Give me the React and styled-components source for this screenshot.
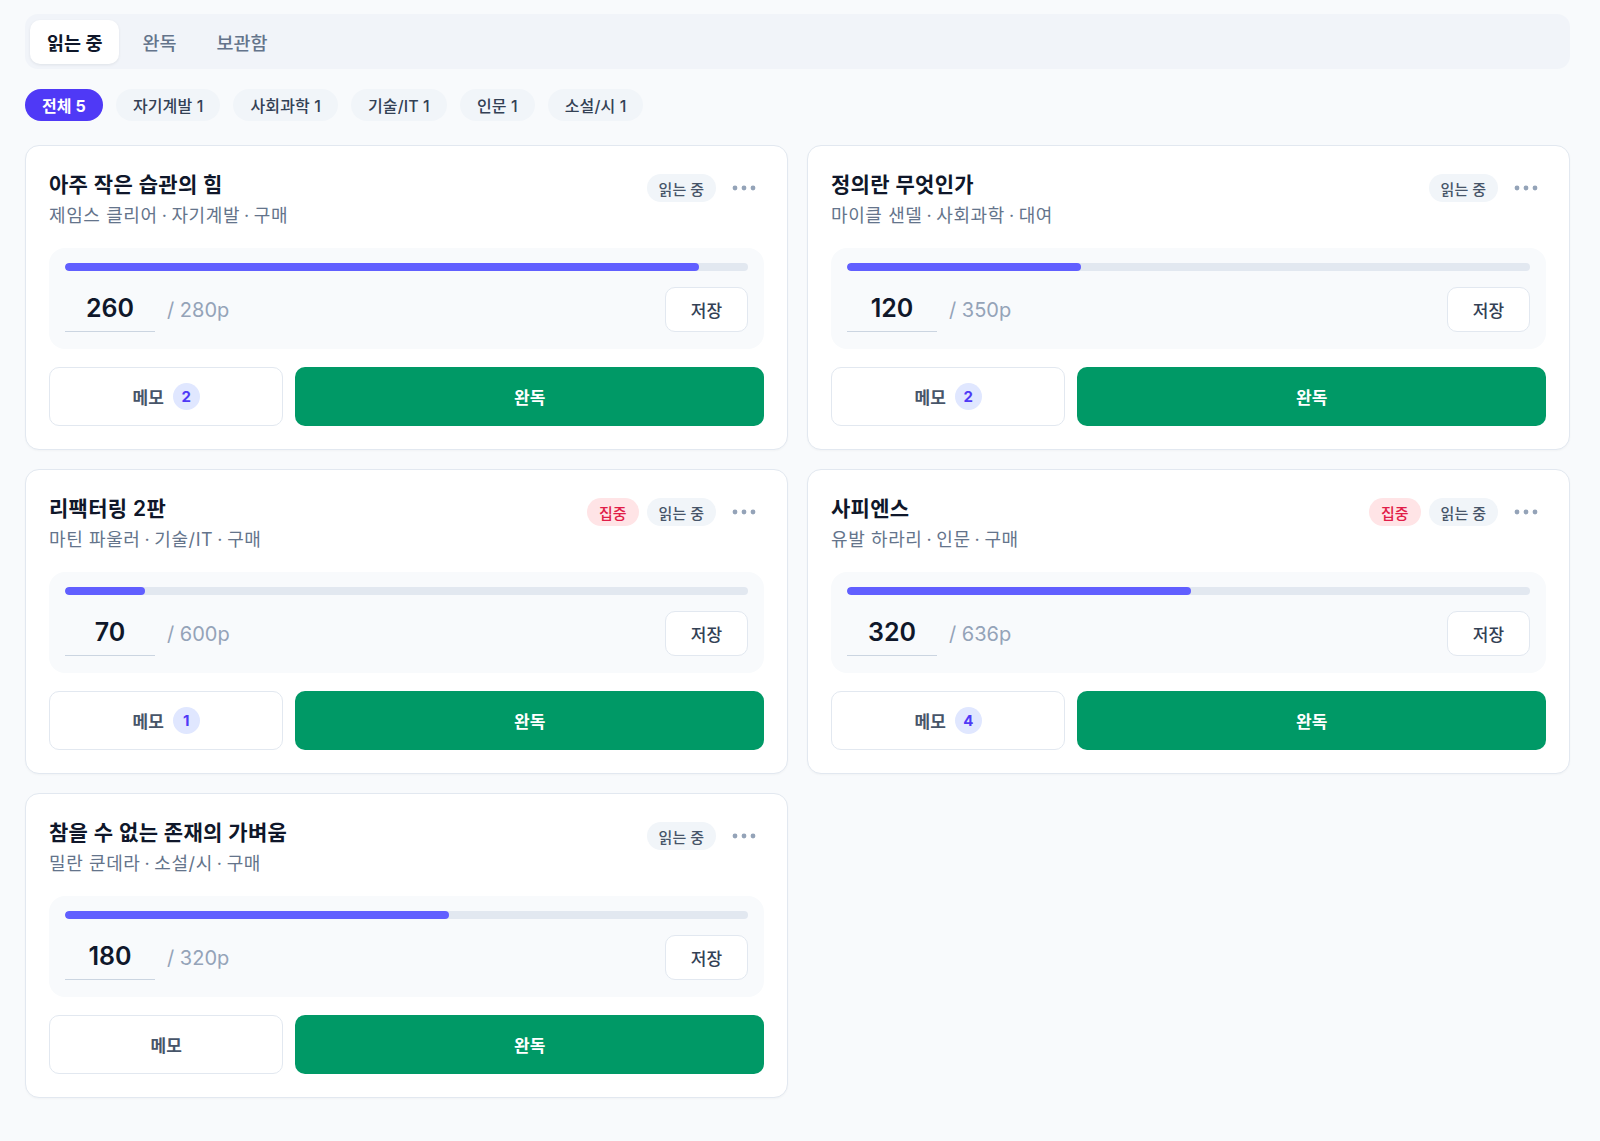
import styled, { createGlobalStyle } from 'styled-components'

const books = [
  { id: 1, title: '아주 작은 습관의 힘', author: '제임스 클리어', genre: '자기계발', how: '구매', page: 260, total: 280, memos: 2, focus: false },
  { id: 2, title: '정의란 무엇인가', author: '마이클 샌델', genre: '사회과학', how: '대여', page: 120, total: 350, memos: 2, focus: false },
  { id: 3, title: '리팩터링 2판', author: '마틴 파울러', genre: '기술/IT', how: '구매', page: 70, total: 600, memos: 1, focus: true },
  { id: 4, title: '사피엔스', author: '유발 하라리', genre: '인문', how: '구매', page: 320, total: 636, memos: 4, focus: true },
  { id: 5, title: '참을 수 없는 존재의 가벼움', author: '밀란 쿤데라', genre: '소설/시', how: '구매', page: 180, total: 320, memos: 0, focus: false },
]

const tabs = ['읽는 중', '완독', '보관함']
const filters = ['전체 5', '자기계발 1', '사회과학 1', '기술/IT 1', '인문 1', '소설/시 1']

export default function App() {
  return (
    <>
      <GlobalStyle />
      <Page>
        <TabBar>
          {tabs.map((t, i) => (
            <Tab key={t} $active={i === 0}>{t}</Tab>
          ))}
        </TabBar>

        <ChipRow>
          {filters.map((f, i) => (
            <Chip key={f} $active={i === 0}>{f}</Chip>
          ))}
        </ChipRow>

        <CardGrid>
          {books.map(b => <BookCard key={b.id} book={b} />)}
        </CardGrid>
      </Page>
    </>
  )
}

function BookCard({ book }) {
  const pct = Math.min(100, (book.page / book.total) * 100)

  return (
    <Card>
      <CardHeader>
        <div>
          <Title>{book.title}</Title>
          <Meta>
            {book.author}<Sep>·</Sep>{book.genre}<Sep>·</Sep>{book.how}
          </Meta>
        </div>
        <HeaderSide>
          {book.focus && <Badge $tone="red">집중</Badge>}
          <Badge>읽는 중</Badge>
          <MoreButton aria-label="더보기">
            <svg width="24" height="6" viewBox="0 0 24 6">
              <circle cx="3" cy="3" r="2.4" fill="#94a3b8" />
              <circle cx="12" cy="3" r="2.4" fill="#94a3b8" />
              <circle cx="21" cy="3" r="2.4" fill="#94a3b8" />
            </svg>
          </MoreButton>
        </HeaderSide>
      </CardHeader>

      <ProgressBox>
        <Track>
          <Fill style={{ width: `${pct}%` }} />
        </Track>
        <PageRow>
          <PageInput defaultValue={book.page} />
          <Total>/ {book.total}p</Total>
          <SaveButton>저장</SaveButton>
        </PageRow>
      </ProgressBox>

      <Actions>
        <MemoButton>
          메모
          {book.memos > 0 && <Count>{book.memos}</Count>}
        </MemoButton>
        <DoneButton>완독</DoneButton>
      </Actions>
    </Card>
  )
}

const GlobalStyle = createGlobalStyle`
  html, body {
    margin: 0;
    background: #f8fafc;
  }
  body {
    font-family: Inter, "Noto Sans CJK KR", sans-serif;
    color: #0f172a;
  }
  button, input {
    font-family: inherit;
  }
`

const Page = styled.main`
  padding: 14px 30px 42px 25px;
`

const TabBar = styled.nav`
  display: flex;
  align-items: center;
  gap: 6px;
  height: 55px;
  padding: 0 5px;
  box-sizing: border-box;
  background: #f1f4f9;
  border-radius: 13px;
`

const Tab = styled.button`
  height: 44px;
  padding: 0 17px;
  border: 0;
  border-radius: 10px;
  font-size: 18.5px;
  font-weight: ${p => (p.$active ? 700 : 500)};
  color: ${p => (p.$active ? '#0f172a' : '#64748b')};
  background: ${p => (p.$active ? '#fff' : 'transparent')};
  box-shadow: ${p => (p.$active ? '0 1px 3px rgba(15, 23, 42, 0.08)' : 'none')};
`

const ChipRow = styled.div`
  display: flex;
  gap: 13px;
  margin-top: 20px;
`

const Chip = styled.button`
  height: 32px;
  padding: 0 17px;
  border: 0;
  border-radius: 16px;
  font-size: 16px;
  letter-spacing: 0.12px;
  font-weight: ${p => (p.$active ? 700 : 500)};
  color: ${p => (p.$active ? '#fff' : '#334155')};
  background: ${p => (p.$active ? '#4f39f6' : '#f1f5f9')};
`

const CardGrid = styled.section`
  display: grid;
  grid-template-columns: 1fr 1fr;
  gap: 19px 19px;
  margin-top: 24px;
`

const Card = styled.article`
  padding: 24px 23px 23px;
  background: #fff;
  border: 1px solid #e2e8f0;
  border-radius: 14px;
  box-shadow: 0 1px 2px rgba(15, 23, 42, 0.03);
`

const CardHeader = styled.header`
  display: flex;
  justify-content: space-between;
  align-items: flex-start;
`

const Title = styled.h3`
  margin: 0;
  font-size: 21px;
  letter-spacing: 0.3px;
  line-height: 30px;
  font-weight: 600;
  color: #0f172a;
`

const Meta = styled.p`
  margin: 3px 0 0;
  font-size: 18px;
  letter-spacing: 0.6px;
  line-height: 26px;
  color: #64748b;
`

const Sep = styled.span`
  margin: 0 4px;
`

const HeaderSide = styled.div`
  display: flex;
  align-items: center;
  gap: 8px;
  margin-top: 2px;
`

const Badge = styled.span`
  display: inline-flex;
  align-items: center;
  height: 28px;
  padding: 0 12px;
  border-radius: 14px;
  font-size: 15px;
  font-weight: 500;
  color: ${p => (p.$tone === 'red' ? '#e11d48' : '#475569')};
  background: ${p => (p.$tone === 'red' ? '#ffe4e6' : '#f1f5f9')};
`

const MoreButton = styled.button`
  display: flex;
  align-items: center;
  justify-content: center;
  width: 40px;
  height: 32px;
  padding: 0;
  border: 0;
  background: transparent;
`

const ProgressBox = styled.div`
  margin-top: 19px;
  padding: 15px 16px 17px;
  background: #f8fafc;
  border-radius: 16px;
`

const Track = styled.div`
  height: 8px;
  border-radius: 4px;
  background: #e2e8f0;
  overflow: hidden;
`

const Fill = styled.div`
  height: 100%;
  border-radius: 4px;
  background: #615fff;
`

const PageRow = styled.div`
  display: flex;
  align-items: center;
  margin-top: 16px;
`

const PageInput = styled.input`
  width: 90px;
  height: 44px;
  box-sizing: border-box;
  padding: 0 0 3px;
  border: 0;
  border-bottom: 1.5px solid #cbd5e1;
  background: transparent;
  text-align: center;
  font-size: 25px;
  font-weight: 600;
  color: #0f172a;
  outline: none;
`

const Total = styled.span`
  margin-left: 12px;
  font-size: 20px;
  color: #94a3b8;
`

const SaveButton = styled.button`
  margin-left: auto;
  width: 83px;
  height: 45px;
  border: 1px solid #e2e8f0;
  border-radius: 10px;
  background: #fff;
  font-size: 17px;
  font-weight: 500;
  color: #334155;
`

const Actions = styled.div`
  display: grid;
  grid-template-columns: 1fr 2fr;
  gap: 12px;
  margin-top: 18px;
`

const MemoButton = styled.button`
  display: flex;
  align-items: center;
  justify-content: center;
  gap: 9px;
  height: 59px;
  border: 1px solid #e2e8f0;
  border-radius: 10px;
  background: #fff;
  font-size: 17px;
  font-weight: 600;
  color: #475569;
`

const Count = styled.span`
  display: inline-flex;
  align-items: center;
  justify-content: center;
  width: 27px;
  height: 27px;
  border-radius: 50%;
  background: #e0e7ff;
  color: #4f39f6;
  font-size: 15px;
  font-weight: 700;
`

const DoneButton = styled.button`
  height: 59px;
  border: 0;
  border-radius: 10px;
  background: #009966;
  font-size: 17px;
  font-weight: 700;
  color: #fff;
`
